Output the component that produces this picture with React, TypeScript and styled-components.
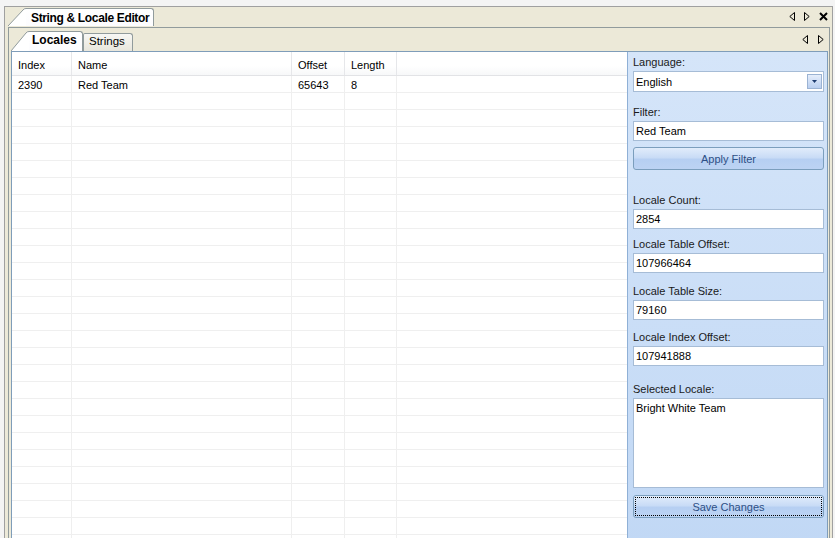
import React from "react";
import styled, { createGlobalStyle } from "styled-components";

const GlobalStyle = createGlobalStyle`
    html, body {
        margin: 0;
        padding: 0;
        background: #f4f4f4;
    }
    body {
        font-family: "Liberation Sans", Arial, sans-serif;
        font-size: 11px;
        color: #000;
    }
`;

const Page = styled.div`
    width: 835px;
    height: 538px;
    overflow: hidden;
    padding-top: 6px;
    box-sizing: border-box;
`;

const Window = styled.div`
    margin: 0 2px 0 4px;
    height: 540px;
    border: 1px solid #a0a0a0;
    border-bottom: none;
    background: #ece9d8;
    display: flex;
    flex-direction: column;
`;

const TabStrip = styled.div<{ $h: number; $pl: number }>`
    height: ${(p) => p.$h}px;
    padding-left: ${(p) => p.$pl}px;
    display: flex;
    align-items: flex-end;
    flex-shrink: 0;
`;

const TabWrap = styled.div<{ $h: number }>`
    display: flex;
    align-items: flex-end;
    height: ${(p) => p.$h}px;
`;

const TabBody = styled.div<{ $active?: boolean; $w: number; $h: number; $ls?: number }>`
    width: ${(p) => p.$w}px;
    height: ${(p) => p.$h}px;
    border-top: 1px solid #919b9c;
    border-right: 1px solid #919b9c;
    border-top-right-radius: 3px;
    background: ${(p) =>
        p.$active ? "linear-gradient(#ffffff, #fcfcfe)" : "linear-gradient(#f7f7f4, #e8e6dc)"};
    font-weight: ${(p) => (p.$active ? "bold" : "normal")};
    font-size: ${(p) => (p.$active ? "12px" : "11.5px")};
    display: flex;
    align-items: center;
    padding-left: 2px;
    box-sizing: border-box;
    white-space: nowrap;
    letter-spacing: ${(p) => p.$ls ?? 0}px;
`;

const PlainTab = styled(TabBody)`
    border-left: 1px solid #919b9c;
    border-top-left-radius: 2px;
    padding-left: 5px;
`;

const NavIcons = styled.div<{ $pr: number; $gap: number }>`
    margin-left: auto;
    align-self: center;
    display: flex;
    align-items: center;
    gap: ${(p) => p.$gap}px;
    padding-right: ${(p) => p.$pr}px;
`;

const DocFrame = styled.div`
    flex: 1;
    margin: 1px 2px 0 3px;
    border: 1px solid #919b9c;
    border-bottom: none;
    display: flex;
    flex-direction: column;
    min-height: 0;
`;

const Content = styled.div`
    flex: 1;
    margin: 0 1px 0 2px;
    border: 1px solid #7f9db9;
    border-bottom: none;
    display: flex;
    min-height: 0;
    background: #fff;
`;

const ListView = styled.div`
    flex: 1;
    background: #fff;
    overflow: hidden;
`;

const HeaderRow = styled.div`
    display: flex;
    height: 23px;
    border-bottom: 1px solid #e2e3e6;
    background: linear-gradient(#ffffff 60%, #f7f8f9);
`;

const HeaderCell = styled.div<{ $w?: number }>`
    ${(p) => (p.$w ? `width: ${p.$w}px;` : "flex: 1;")}
    flex-shrink: 0;
    box-sizing: border-box;
    padding: 2px 0 0 6px;
    display: flex;
    align-items: center;
    border-right: ${(p) => (p.$w ? "1px solid #e6e7ea" : "none")};
`;

const Row = styled.div`
    display: flex;
    height: 17px;
    border-bottom: 1px solid #efefef;
    box-sizing: border-box;
`;

const Cell = styled.div<{ $w?: number }>`
    ${(p) => (p.$w ? `width: ${p.$w}px;` : "flex: 1;")}
    flex-shrink: 0;
    box-sizing: border-box;
    padding: 2px 0 0 6px;
    display: flex;
    align-items: center;
    border-right: ${(p) => (p.$w ? "1px solid #efefef" : "none")};
`;

const Panel = styled.div`
    width: 200px;
    flex-shrink: 0;
    border-left: 1px solid #8fb0d6;
    background: linear-gradient(#d5e5f9, #c1d8f5);
    padding: 3px 3px 0 5px;
    box-sizing: border-box;
    display: flex;
    flex-direction: column;
`;

const Field = styled.div<{ $mt: number }>`
    margin-top: ${(p) => p.$mt}px;
    display: flex;
    flex-direction: column;
`;

const Label = styled.div`
    line-height: 14px;
    height: 14px;
    margin-bottom: 2px;
    color: #1a1a1a;
`;

const TextBox = styled.div<{ $h?: number }>`
    height: ${(p) => p.$h ?? 20}px;
    box-sizing: border-box;
    border: 1px solid #a6bcd6;
    background: #fff;
    padding: 2px 2px 0;
    line-height: 14px;
    display: flex;
    align-items: flex-start;
`;

const Combo = styled(TextBox)`
    height: 21px;
    align-items: center;
    padding-top: 0;
    justify-content: space-between;
    padding-right: 1px;
`;

const DropButton = styled.div`
    width: 15px;
    height: 15px;
    box-sizing: border-box;
    border: 1px solid #9bb3d3;
    background: linear-gradient(#e6eefb, #b9cff0);
    display: flex;
    align-items: center;
    justify-content: center;
`;

const Button = styled.div<{ $focused?: boolean; $mt: number }>`
    margin-top: ${(p) => p.$mt}px;
    height: 23px;
    box-sizing: border-box;
    border: 1px solid #7b9ebd;
    border-radius: 3px;
    background: linear-gradient(#e1ecfb 0%, #c9dcf6 45%, #b6cff2 55%, #bcd3f3 100%);
    color: #2d4f85;
    display: flex;
    align-items: center;
    justify-content: center;
    position: relative;
    ${(p) =>
        p.$focused &&
        `
        &::after {
            content: "";
            position: absolute;
            inset: 1px;
            border: 1px dotted #000;
        }
    `}
`;

const ArrowLeft = () => (
    <svg width="6" height="9" viewBox="0 0 6 9">
        <path d="M5.5 0.5 L0.8 4.5 L5.5 8.5 Z" fill="none" stroke="#000" strokeWidth="1" />
    </svg>
);

const ArrowRight = () => (
    <svg width="6" height="9" viewBox="0 0 6 9">
        <path d="M0.5 0.5 L5.2 4.5 L0.5 8.5 Z" fill="none" stroke="#000" strokeWidth="1" />
    </svg>
);

const CloseX = () => (
    <svg width="9" height="9" viewBox="0 0 9 9">
        <path d="M1 1 L8 8 M8 1 L1 8" stroke="#000" strokeWidth="2" />
    </svg>
);

const Slant = ({ h }: { h: number }) => (
    <svg width="18" height={h} viewBox={`0 0 18 ${h}`} style={{ display: "block" }}>
        <path d={`M0 ${h} L15 2 Q16 0.5 18 0.5 L18 ${h} Z`} fill="#ffffff" />
        <path d={`M0 ${h} L15 2 Q16 0.5 18 0.5`} fill="none" stroke="#919b9c" strokeWidth="1" />
    </svg>
);

const cols = [60, 220, 53, 52];
const rowCount = 28;

const App: React.FC = () => {
    return (
        <>
            <GlobalStyle />
            <Page>
                <Window>
                    <TabStrip $h={19} $pl={3}>
                        <TabWrap $h={18}>
                            <Slant h={18} />
                            <TabBody $active $w={128} $h={18} $ls={-0.35}>
                                <span style={{ paddingLeft: 3 }}>String &amp; Locale Editor</span>
                            </TabBody>
                        </TabWrap>
                        <NavIcons $pr={4} $gap={9}>
                            <ArrowLeft />
                            <ArrowRight />
                            <CloseX />
                        </NavIcons>
                    </TabStrip>
                    <DocFrame>
                        <TabStrip $h={23} $pl={2}>
                            <TabWrap $h={20}>
                                <Slant h={20} />
                                <TabBody $active $w={54} $h={20}>
                                    <span style={{ paddingLeft: 1, paddingBottom: 4 }}>Locales</span>
                                </TabBody>
                                <PlainTab $w={50} $h={18}>
                                    <span style={{ paddingBottom: 4 }}>Strings</span>
                                </PlainTab>
                            </TabWrap>
                            <NavIcons $pr={5} $gap={10}>
                                <ArrowLeft />
                                <ArrowRight />
                            </NavIcons>
                        </TabStrip>
                        <Content>
                            <ListView>
                                <HeaderRow>
                                    <HeaderCell $w={cols[0]}>Index</HeaderCell>
                                    <HeaderCell $w={cols[1]}>Name</HeaderCell>
                                    <HeaderCell $w={cols[2]}>Offset</HeaderCell>
                                    <HeaderCell $w={cols[3]}>Length</HeaderCell>
                                    <HeaderCell />
                                </HeaderRow>
                                {Array.from({ length: rowCount }).map((_, i) => (
                                    <Row key={i}>
                                        <Cell $w={cols[0]}>{i === 0 ? "2390" : ""}</Cell>
                                        <Cell $w={cols[1]}>{i === 0 ? "Red Team" : ""}</Cell>
                                        <Cell $w={cols[2]}>{i === 0 ? "65643" : ""}</Cell>
                                        <Cell $w={cols[3]}>{i === 0 ? "8" : ""}</Cell>
                                        <Cell />
                                    </Row>
                                ))}
                            </ListView>
                            <Panel>
                                <Field $mt={0}>
                                    <Label>Language:</Label>
                                    <Combo>
                                        <span>English</span>
                                        <DropButton>
                                            <svg width="5" height="3" viewBox="0 0 5 3">
                                                <path d="M0 0 L5 0 L2.5 3 Z" fill="#1c3a6e" />
                                            </svg>
                                        </DropButton>
                                    </Combo>
                                </Field>
                                <Field $mt={13}>
                                    <Label>Filter:</Label>
                                    <TextBox>Red Team</TextBox>
                                </Field>
                                <Button $mt={6}>Apply Filter</Button>
                                <Field $mt={23}>
                                    <Label>Locale Count:</Label>
                                    <TextBox>2854</TextBox>
                                </Field>
                                <Field $mt={8}>
                                    <Label>Locale Table Offset:</Label>
                                    <TextBox>107966464</TextBox>
                                </Field>
                                <Field $mt={11}>
                                    <Label>Locale Table Size:</Label>
                                    <TextBox>79160</TextBox>
                                </Field>
                                <Field $mt={10}>
                                    <Label>Locale Index Offset:</Label>
                                    <TextBox>107941888</TextBox>
                                </Field>
                                <Field $mt={16}>
                                    <Label>Selected Locale:</Label>
                                    <TextBox $h={90}>Bright White Team</TextBox>
                                </Field>
                                <Button $mt={7} $focused>
                                    Save Changes
                                </Button>
                            </Panel>
                        </Content>
                    </DocFrame>
                </Window>
            </Page>
        </>
    );
};

export default App;
